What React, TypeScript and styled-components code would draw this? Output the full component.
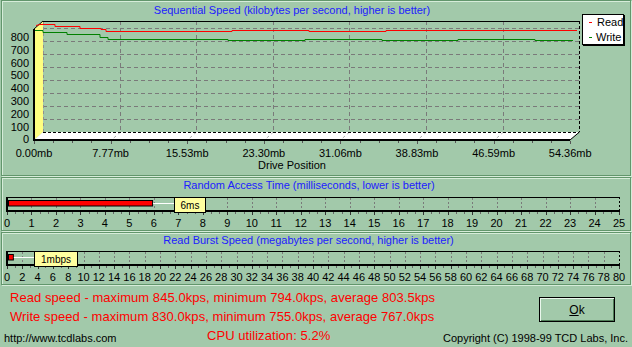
import React from 'react';
import styled, { createGlobalStyle } from 'styled-components';

const BG = '#a2c9aa';
const FONT = '"Liberation Sans", Arial, sans-serif';

const GlobalStyle = createGlobalStyle`
  html, body {
    margin: 0;
    padding: 0;
    background: ${BG};
  }
  body {
    font-family: ${FONT};
  }
`;

const Window = styled.div`
  width: 632px;
  height: 347px;
  background: ${BG};
  overflow: hidden;
  display: flex;
  flex-direction: column;
  gap: 1px;
`;

const Panel = styled.section`
  margin: 0 1px;
  border: 1px solid #62966c;
  box-shadow: inset 1px 1px 0 #d6ecd9, 1px 1px 0 #d6ecd9;
  display: flex;
  flex-direction: column;
`;

const PanelTitle = styled.div<{ $h: number; $shift?: number }>`
  height: ${(p) => p.$h}px;
  line-height: ${(p) => p.$h}px;
  padding-right: ${(p) => p.$shift ?? 0}px;
  text-align: center;
  color: #2020ff;
  font-size: 11px;
  white-space: nowrap;
`;

const Plot = styled.svg`
  display: block;
  overflow: visible;
  font-family: ${FONT};
  font-size: 11px;
  text {
    fill: #000;
  }
`;

const Footer = styled.footer`
  flex: 1;
  display: grid;
  grid-template-columns: 1fr auto;
  padding-top: 2px;
`;

const Stats = styled.div`
  display: flex;
  flex-direction: column;
  padding-left: 10px;
`;

const StatLine = styled.div`
  color: #ff0000;
  font-size: 13px;
  line-height: 19px;
  letter-spacing: 0.06px;
  white-space: nowrap;
`;

const BottomRow = styled.div`
  display: flex;
  align-items: flex-end;
  margin-left: -6px;
`;

const SiteLink = styled.span`
  width: 203px;
  font-size: 11px;
  line-height: 13px;
  color: #000;
`;

const Side = styled.div`
  display: flex;
  flex-direction: column;
  align-items: flex-end;
  justify-content: space-between;
  padding: 9px 4px 2px 0;
`;

const OkButton = styled.button`
  width: 76px;
  height: 25px;
  margin-right: 13px;
  padding: 0;
  background: ${BG};
  border: 1px solid #000;
  box-shadow: inset 1px 1px 0 #eaf7ec, inset -1px -1px 0 #4f7d57;
  font-family: ${FONT};
  font-size: 12px;
  color: #000;
`;

const Copyright = styled.span`
  font-size: 11px;
  line-height: 13px;
  color: #000;
  white-space: nowrap;
`;

// chart geometry (page coordinates)
const BACK_L = 43;
const BACK_R = 579;
const TOP = 21;
const FLOOR = 132;
const DX = 9;
const DY = 8;
const COL = 76.6;
const X_LABELS = ['0.00mb', '7.77mb', '15.53mb', '23.30mb', '31.06mb', '38.83mb', '46.59mb', '54.36mb'];

const READ_PATH = 'M36,25.5 L40,24.5 H55 V26.5 H80 V28.5 H101 V29.5 H106 V31.5 H232 V30.5 H309 V31.5 H386 V30.5 H577';
const WRITE_PATH = 'M35,30.5 H43 V32.5 H67 V34.5 H100 V37.5 H108 V39.5 H228 V40.5 H305 V39.5 H382 V40.5 H458 V39.5 H535 V40.5 H573';

function SpeedChart() {
  const px = (v: number) => Math.round(v) + 0.5;
  const cols = [1, 2, 3, 4, 5, 6].map((k) => px(BACK_L + COL * k));
  const rows = [1, 2, 3, 4, 5, 6, 7, 8].map((i) => FLOOR - 13 * i + 0.5);
  const minor = Array.from({ length: 29 }, (_, i) => px(BACK_L - DX + (COL / 4) * i));

  return (
    <Plot width={628} height={155} viewBox="2 20 628 155">
      {/* yellow side wall */}
      <polygon points={`${BACK_L - DX},${TOP + DY} ${BACK_L},${TOP} ${BACK_L},${FLOOR} ${BACK_L - DX},${FLOOR + DY}`} fill="#ffff80" />
      {/* white floor */}
      <polygon points={`${BACK_L - DX},${FLOOR + DY} ${BACK_L},${FLOOR} ${BACK_R},${FLOOR} ${BACK_R - DX},${FLOOR + DY}`} fill="#fff" />

      {rows.map((y) => (
        <line key={y} x1={BACK_L} x2={BACK_R} y1={y} y2={y} stroke="#7a7a7a" strokeDasharray="4 3" />
      ))}
      {cols.map((x) => (
        <g key={x}>
          <line x1={x} x2={x} y1={TOP} y2={FLOOR} stroke="#7a7a7a" strokeDasharray="4 3" />
          <line x1={x} x2={x - DX} y1={FLOOR} y2={FLOOR + DY} stroke="#b0b0b0" strokeDasharray="3 3" />
        </g>
      ))}
      <line x1={BACK_L + 0.5} x2={BACK_L + 0.5} y1={TOP} y2={FLOOR} stroke="#909090" strokeDasharray="3 3" />

      {/* frame */}
      <line x1={BACK_L} x2={BACK_R} y1={TOP + 0.5} y2={TOP + 0.5} stroke="#000" />
      <line x1={BACK_R + 0.5} x2={BACK_R + 0.5} y1={TOP} y2={FLOOR} stroke="#000" strokeDasharray="3 2" />
      <line x1={BACK_L} x2={BACK_R} y1={FLOOR + 0.5} y2={FLOOR + 0.5} stroke="#000" strokeDasharray="3 2" />
      <line x1={BACK_L - DX} y1={TOP + DY} x2={BACK_L} y2={TOP} stroke="#000" />
      <line x1={BACK_R + 0.5} y1={FLOOR} x2={BACK_R - DX} y2={FLOOR + DY} stroke="#000" />
      <rect x={BACK_L - DX - 1} y={TOP + DY} width={2} height={FLOOR - TOP + 1} fill="#000" />
      <rect x={BACK_L - DX - 1} y={FLOOR + DY - 1} width={BACK_R - BACK_L + 1} height={2} fill="#000" />

      {minor.map((x, i) => (
        <line key={x} x1={x} x2={x} y1={FLOOR + DY + 1} y2={FLOOR + DY + (i % 4 === 0 ? 4 : 3)} stroke="#555" />
      ))}

      {/* series */}
      <path d={READ_PATH} fill="none" stroke="#ff0000" />
      <path d={WRITE_PATH} fill="none" stroke="#008000" />

      {/* y axis */}
      {[0, 1, 2, 3, 4, 5, 6, 7, 8].map((i) => (
        <text key={i} x={29} y={143.3 - 12.8 * i} textAnchor="end">
          {i * 100}
        </text>
      ))}

      {/* x axis */}
      {X_LABELS.map((l, k) => (
        <text key={l} x={BACK_L - DX + COL * k} y={157} textAnchor="middle">
          {l}
        </text>
      ))}
      <text x={292} y={169} textAnchor="middle">
        Drive Position
      </text>

      {/* legend */}
      <rect x={583} y={15} width={42} height={31} fill="#000" />
      <rect x={582.5} y={14.5} width={41} height={30} fill="#fff" stroke="#000" />
      <line x1={589} x2={592} y1={22.5} y2={22.5} stroke="#ff0000" />
      <text x={597} y={26}>Read</text>
      <line x1={589} x2={592} y1={37.5} y2={37.5} stroke="#008000" />
      <text x={596} y={40.5}>Write</text>
    </Plot>
  );
}

type ScaleBarProps = {
  max: number;
  labelStep: number;
  gridStep: number;
  minorStep: number;
  value: number;
  label: string;
};

function ScaleBar({ max, labelStep, gridStep, minorStep, value, label }: ScaleBarProps) {
  const scale = 612 / max;
  const at = (v: number) => 7 + scale * v;
  const px = (v: number) => Math.round(v) + 0.5;
  const grid: number[] = [];
  for (let v = gridStep; v < max; v += gridStep) grid.push(v);
  const minor: number[] = [];
  for (let v = 0; v <= max + 0.001; v += minorStep) minor.push(v);
  const labels: number[] = [];
  for (let v = 0; v <= max; v += labelStep) labels.push(v);

  const end = at(value) - 1.3;
  const boxX = Math.round(end + 21);
  const boxW = label.length * 6 + 13;

  return (
    <Plot width={628} height={37} viewBox="2 0 628 37">
      {grid.map((v) => (
        <line key={v} x1={px(at(v))} x2={px(at(v))} y1={5} y2={17} stroke="#7a7a7a" strokeDasharray="2 2" />
      ))}
      {minor.map((v, i) => (
        <line key={i} x1={px(at(v))} x2={px(at(v))} y1={19} y2={21} stroke="#666" />
      ))}
      {labels.map((v) => (
        <line key={v} x1={px(at(v))} x2={px(at(v))} y1={19} y2={22} stroke="#333" />
      ))}

      <line x1={6} x2={619} y1={4.5} y2={4.5} stroke="#000" />
      <rect x={6} y={17} width={614} height={2} fill="#000" />
      <rect x={6} y={4} width={2} height={15} fill="#000" />
      <line x1={619.5} x2={619.5} y1={4} y2={17} stroke="#000" strokeDasharray="2 2" />

      <rect x={8.5} y={7.5} width={Math.max(end - 8.5, 4)} height={5.5} fill="#ff0000" stroke="#000" />
      <line x1={end + 0.5} x2={boxX} y1={10.5} y2={10.5} stroke="#fff" />
      <rect x={boxX + 0.5} y={4.5} width={boxW} height={15} fill="#ffffa0" stroke="#000" />
      <text x={boxX + 0.5 + boxW / 2} y={16} textAnchor="middle" fontSize={10}>
        {label}
      </text>

      {labels.map((v) => (
        <text key={v} x={at(v)} y={33.5} textAnchor="middle">
          {v}
        </text>
      ))}
    </Plot>
  );
}

export default function App() {
  return (
    <>
      <GlobalStyle />
      <Window>
        <Panel>
          <PanelTitle $h={19} $shift={48}>
            Sequential Speed (kilobytes per second, higher is better)
          </PanelTitle>
          <SpeedChart />
        </Panel>

        <Panel>
          <PanelTitle $h={15} $shift={14}>
            Random Access Time (milliseconds, lower is better)
          </PanelTitle>
          <ScaleBar max={25} labelStep={1} gridStep={1} minorStep={1 / 3} value={6} label="6ms" />
        </Panel>

        <Panel>
          <PanelTitle $h={14} $shift={15}>
            Read Burst Speed (megabytes per second, higher is better)
          </PanelTitle>
          <ScaleBar max={80} labelStep={2} gridStep={2} minorStep={1} value={1} label="1mbps" />
        </Panel>

        <Footer>
          <Stats>
            <StatLine>Read speed - maximum 845.0kps, minimum 794.0kps, average 803.5kps</StatLine>
            <StatLine>Write speed - maximum 830.0kps, minimum 755.0kps, average 767.0kps</StatLine>
            <BottomRow>
              <SiteLink>http://www.tcdlabs.com</SiteLink>
              <StatLine>CPU utilization: 5.2%</StatLine>
            </BottomRow>
          </Stats>
          <Side>
            <OkButton type="button">
              <u>O</u>k
            </OkButton>
            <Copyright>Copyright (C) 1998-99 TCD Labs, Inc.</Copyright>
          </Side>
        </Footer>
      </Window>
    </>
  );
}
